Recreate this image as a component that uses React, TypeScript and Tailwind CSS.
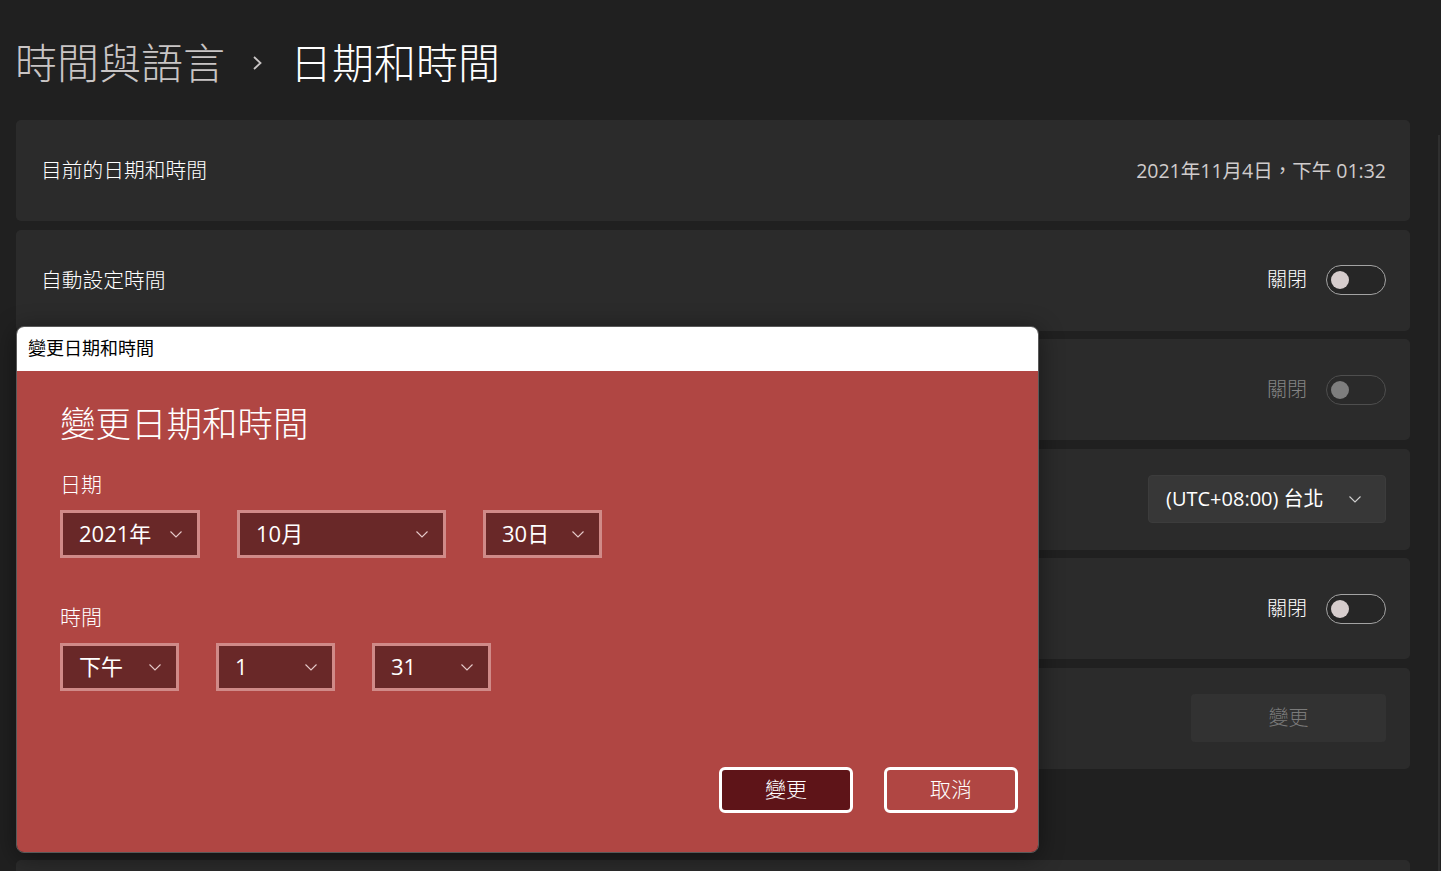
const FONT = "[font-family:'Open_Sans','Noto_Sans_CJK_TC',sans-serif]";

const Chevron = ({ className = "" }: { className?: string }) => (
  <svg width="12" height="7" viewBox="0 0 12 7" className={className} fill="none">
    <polyline points="0.5,0.5 6,6 11.5,0.5" stroke="currentColor" strokeWidth="1.1" />
  </svg>
);

const Toggle = ({ disabled = false }: { disabled?: boolean }) => (
  <div className="flex items-center gap-[19px]">
    <span className={`text-[20px] ${disabled ? "text-[#858585]" : "text-white"}`}>關閉</span>
    <span
      className={`flex h-[30px] w-[60px] items-center rounded-full border px-[4px] ${
        disabled ? "border-[#4e4e4e] bg-[#2a2a2a]" : "border-[#a3a3a3] bg-[#262626]"
      }`}
    >
      <span
        className={`h-[18px] w-[18px] rounded-full ${disabled ? "bg-[#7e7e7e]" : "bg-[#d6cdcd]"}`}
      />
    </span>
  </div>
);

const Card = ({ left, right }: { left?: string; right?: React.ReactNode }) => (
  <div className="flex h-[101px] items-center justify-between rounded-[5px] bg-[#2b2b2b] pl-[25px] pr-[24px]">
    <span className="text-[20.75px] text-white">{left}</span>
    {right}
  </div>
);

const Select = ({ value, width }: { value: string; width: string }) => (
  <div
    className={`flex h-[48px] items-center justify-between border-[3px] border-[#d08a88] bg-[#692828] pb-[3px] pl-[16px] pr-[15px] ${width}`}
  >
    <span className="text-[22px] font-normal leading-none text-white">{value}</span>
    <Chevron className="mt-[3px] text-[#e6caca]" />
  </div>
);

export default function App() {
  return (
    <div className={`relative h-[871px] w-full overflow-hidden bg-[#202020] font-light ${FONT}`}>
      <div className="flex h-[120px] items-center pl-[15px] pt-[6px]">
        <span className="text-[42px] leading-none text-[#c9c5c5]">時間與語言</span>
        <svg width="11" height="14" viewBox="0 0 11 14" fill="none" className="ml-[27px] mr-[27px] text-[#c9c5c5]">
          <polyline points="2,1 8.5,7 2,13" stroke="currentColor" strokeWidth="1.8" />
        </svg>
        <span className="text-[42px] leading-none text-white">日期和時間</span>
      </div>

      <div className="mr-[31px] ml-[16px] flex flex-col gap-[8.6px]">
        <Card
          left="目前的日期和時間"
          right={
            <span className="text-[19.5px] font-normal text-[#d0cccc]">2021年11月4日，下午 01:32</span>
          }
        />
        <Card left="自動設定時間" right={<Toggle />} />
        <Card right={<Toggle disabled />} />
        <Card
          right={
            <div className="flex h-[48px] w-[238px] items-center justify-between rounded-[4px] border border-[#3c3c3c] bg-[#373737] pl-[17px] pr-[24px]">
              <span className="text-[20px] font-normal text-white">(UTC+08:00) 台北</span>
              <Chevron className="text-[#d0d0d0]" />
            </div>
          }
        />
        <Card right={<Toggle />} />
        <Card
          right={
            <div className="flex h-[48px] w-[195px] items-center justify-center rounded-[4px] bg-[#323232] text-[20px] text-[#7a7a7a]">
              變更
            </div>
          }
        />
        <div className="mt-[82px] h-[60px] rounded-[5px] bg-[#2b2b2b]" />
      </div>

      <div className="absolute right-[1px] top-[135px] bottom-0 w-[2px] bg-[#2f2f2f]" />

      {/* dialog */}
      <div className="absolute left-[16px] top-[326px] flex h-[527px] w-[1023px] flex-col overflow-hidden rounded-[8px] border border-[#595959] shadow-[0_4px_24px_rgba(0,0,0,0.45)]">
        <div className="flex h-[44px] items-center bg-white pb-[2px] pl-[11px] text-[18px] font-normal text-black">
          變更日期和時間
        </div>
        <div className="flex flex-1 flex-col bg-[#b04643] pl-[43px]">
          <div className="pt-[31px] text-[35.5px] leading-[42px] text-white">變更日期和時間</div>
          <div className="mt-[27px] text-[21px] leading-[26px] text-white">日期</div>
          <div className="mt-[13px] flex gap-[37px]">
            <Select value="2021年" width="w-[140px]" />
            <Select value="10月" width="w-[209px]" />
            <Select value="30日" width="w-[119px]" />
          </div>
          <div className="mt-[46px] text-[21px] leading-[26px] text-white">時間</div>
          <div className="mt-[13px] flex gap-[37px]">
            <Select value="下午" width="w-[119px]" />
            <Select value="1" width="w-[119px]" />
            <Select value="31" width="w-[119px]" />
          </div>
          <div className="mt-auto flex justify-end gap-[31px] pb-[39px] pr-[20px]">
            <button className="h-[46px] w-[134px] rounded-[6px] border-[3px] border-white bg-[#5e1418] text-[21px] text-white">
              變更
            </button>
            <button className="h-[46px] w-[134px] rounded-[6px] border-[3px] border-white text-[21px] text-white">
              取消
            </button>
          </div>
        </div>
      </div>
    </div>
  );
}
